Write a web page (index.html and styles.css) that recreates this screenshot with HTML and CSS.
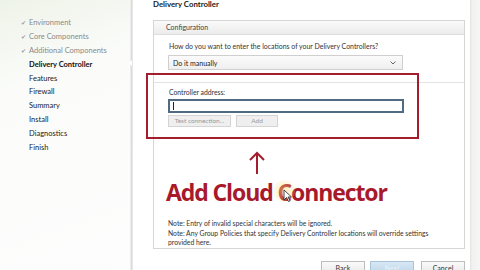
FILE: index.html
```html
<!DOCTYPE html>
<html lang="en">
<head>
    <meta charset="UTF-8">
    <title>Delivery Controller</title>
    <link rel="stylesheet" href="styles.css">
</head>
<body>
    <div class="wizard">
        <!-- Wizard steps -->
        <nav class="steps">
            <ul>
                <li class="done">Environment</li>
                <li class="done">Core Components</li>
                <li class="done">Additional Components</li>
                <li class="current">Delivery Controller</li>
                <li>Features</li>
                <li>Firewall</li>
                <li>Summary</li>
                <li>Install</li>
                <li>Diagnostics</li>
                <li>Finish</li>
            </ul>
        </nav>
        <div class="divider"><span class="notch"></span></div>

        <!-- Page content -->
        <main class="page">
            <h1>Delivery Controller</h1>
            <section class="panel">
                <div class="panel-head">Configuration</div>
                <div class="panel-body">
                    <p class="question">How do you want to enter the locations of your Delivery Controllers?</p>
                    <div class="select">
                        <span>Do it manually</span>
                        <svg width="6" height="4" viewBox="0 0 6 4"><path d="M0.5 0.5 L3 3 L5.5 0.5" fill="none" stroke="#666" stroke-width="1"/></svg>
                    </div>
                </div>
                <div class="address">
                    <label>Controller address:</label>
                    <div class="input"><span class="caret"></span></div>
                    <div class="actions">
                        <button class="btn-small test">Test connection...</button>
                        <button class="btn-small add">Add</button>
                    </div>
                </div>
                <div class="callout">
                    <svg class="arrow" width="18" height="24" viewBox="0 0 18 24">
                        <path d="M9 2 L9 23 M2 9 L9 2 L16 9" fill="none" stroke="#a41d2c" stroke-width="2"/>
                    </svg>
                    <div class="callout-text">Add Cloud Connector</div>
                    <span class="click-glow"></span>
                    <svg class="pointer" width="9" height="13" viewBox="0 0 9 13">
                        <path d="M1 1 L1 11 L3.5 8.5 L5.5 12.5 L7 11.8 L5 8 L8.5 8 Z" fill="#fff" stroke="#222" stroke-width="0.8"/>
                    </svg>
                </div>
                <div class="notes">
                    <p>Note: Entry of invalid special characters will be ignored.</p>
                    <p>Note: Any Group Policies that specify Delivery Controller locations will override settings provided here.</p>
                </div>
            </section>
            <div class="footer">
                <button class="btn">Back</button>
                <button class="btn next">Next</button>
                <button class="btn cancel">Cancel</button>
            </div>
            <div class="highlight"></div>
        </main>
        <div class="edge"></div>
    </div>
</body>
</html>
```

FILE: styles.css
```css
/* General Page Styles */
body {
    margin: 0;
    padding: 0;
    font-family: 'Lato', 'Open Sans', sans-serif;
    color: #222;
    background: #fff;
    overflow: hidden;
}

.wizard {
    display: flex;
    width: 480px;
    height: 270px;
}

/* Steps Sidebar */
.steps {
    width: 130px;
    background: linear-gradient(160deg, #eef3e8 0%, #fbfcfa 30%, #fdfdfd 100%);
}

.steps ul {
    list-style: none;
    margin: 0;
    padding: 16px 0 0 29px;
}

.steps li {
    position: relative;
    height: 13.9px;
    line-height: 13px;
    font-size: 7.5px;
    color: #222;
}

.steps li.done {
    color: #8a8a8a;
}

.steps li.done::before {
    content: "\2714";
    position: absolute;
    left: -8px;
    font-size: 6px;
    color: #9a9a9a;
}

.steps li.current {
    font-weight: bold;
    color: #111;
}

.divider {
    position: relative;
    width: 3px;
    background: linear-gradient(90deg, #f4f4f4, #dcdcdc, #ededed);
}

.notch {
    position: absolute;
    top: 60px;
    left: -1px;
    border-top: 3px solid transparent;
    border-bottom: 3px solid transparent;
    border-right: 3px solid #fff;
}

/* Main Page */
.page {
    position: relative;
    width: 337px;
    padding-left: 20px;
    box-sizing: border-box;
    background: #fff;
}

h1 {
    margin: -1px 0 0 0;
    height: 21px;
    line-height: 10px;
    font-size: 7.8px;
    font-weight: bold;
    color: #222;
}

/* Configuration Panel */
.panel {
    width: 312px;
    height: 229px;
    border: 1px solid #d6d6d6;
    box-sizing: border-box;
    display: flex;
    flex-direction: column;
}

.panel-head {
    height: 13px;
    line-height: 13px;
    padding-left: 12px;
    font-size: 7px;
    color: #444;
    background: linear-gradient(#fafafa, #ececec);
    border-bottom: 1px solid #dddddd;
}

.panel-body {
    padding: 6px 0 0 14px;
    height: 42px;
}

.question {
    margin: 0 0 4px 1px;
    font-size: 6.95px;
    line-height: 10px;
    color: #333;
}

.select {
    width: 235px;
    height: 15px;
    box-sizing: border-box;
    border: 1px solid #cfcfcf;
    background: linear-gradient(#fbfbfb, #efefef);
    display: flex;
    align-items: center;
    justify-content: space-between;
    padding: 0 6px 0 4px;
    font-size: 7px;
    color: #222;
}

.address {
    border-top: 1px solid #e3e3e3;
    padding: 4px 0 0 14px;
    height: 64px;
}

.address label {
    display: block;
    font-size: 6.8px;
    line-height: 10px;
    color: #333;
    margin-left: 1px;
}

.input {
    width: 236px;
    height: 14px;
    box-sizing: border-box;
    border: 2px solid #4f6b83;
    background: #fff;
    margin-top: 2px;
    display: flex;
    align-items: center;
    padding-left: 3px;
}

.caret {
    width: 1px;
    height: 8px;
    background: #222;
}

.actions {
    display: flex;
    gap: 5px;
    margin-top: 2px;
}

.btn-small {
    height: 12px;
    padding: 0;
    border: 1px solid #d4d4d4;
    background: #efefef;
    font-family: 'Lato', sans-serif;
    font-size: 6.5px;
    color: #9a9a9a;
}

.btn-small.test {
    width: 63px;
}

.btn-small.add {
    width: 42px;
}

/* Annotation */
.callout {
    position: relative;
    height: 68px;
    padding-left: 12px;
}

.arrow {
    display: block;
    margin: 0 0 0 82px;
    padding-top: 2px;
}

.callout-text {
    margin-top: 4px;
    font-family: 'Open Sans', sans-serif;
    font-weight: bold;
    font-size: 23px;
    line-height: 26px;
    letter-spacing: -1.1px;
    color: #a8192b;
}

.click-glow {
    position: absolute;
    left: 119px;
    top: 31px;
    width: 22px;
    height: 22px;
    border-radius: 50%;
    background: radial-gradient(rgba(250, 220, 120, 0.55), rgba(250, 225, 140, 0.15) 70%, transparent);
}

.pointer {
    position: absolute;
    left: 129px;
    top: 40px;
}

.notes {
    padding: 4px 16px 0 14px;
}

.notes p {
    margin: 0;
    font-size: 6.8px;
    line-height: 9.5px;
    color: #333;
}

/* Footer Buttons */
.footer {
    display: flex;
    justify-content: flex-end;
    gap: 5px;
    width: 312px;
    margin-top: 12px;
}

.btn {
    width: 44px;
    height: 14px;
    padding: 0;
    border: 1px solid #bdbdbd;
    background: linear-gradient(#fafafa, #e9e9e9);
    font-family: 'Lato', sans-serif;
    font-size: 7px;
    color: #333;
}

.btn.next {
    border-color: #a8c4da;
    background: linear-gradient(#d8e8f4, #bcd4e8);
    color: #e8f0f7;
}

.btn.cancel {
    margin-left: 2px;
}

.highlight {
    position: absolute;
    left: 13px;
    top: 73px;
    width: 273px;
    height: 66px;
    box-sizing: border-box;
    border: 2px solid #a41d2c;
}

.edge {
    flex: 1;
    background: linear-gradient(90deg, #e2e2e2 0, #f1f1f1 2px, #f6f6f4 100%);
}
```
